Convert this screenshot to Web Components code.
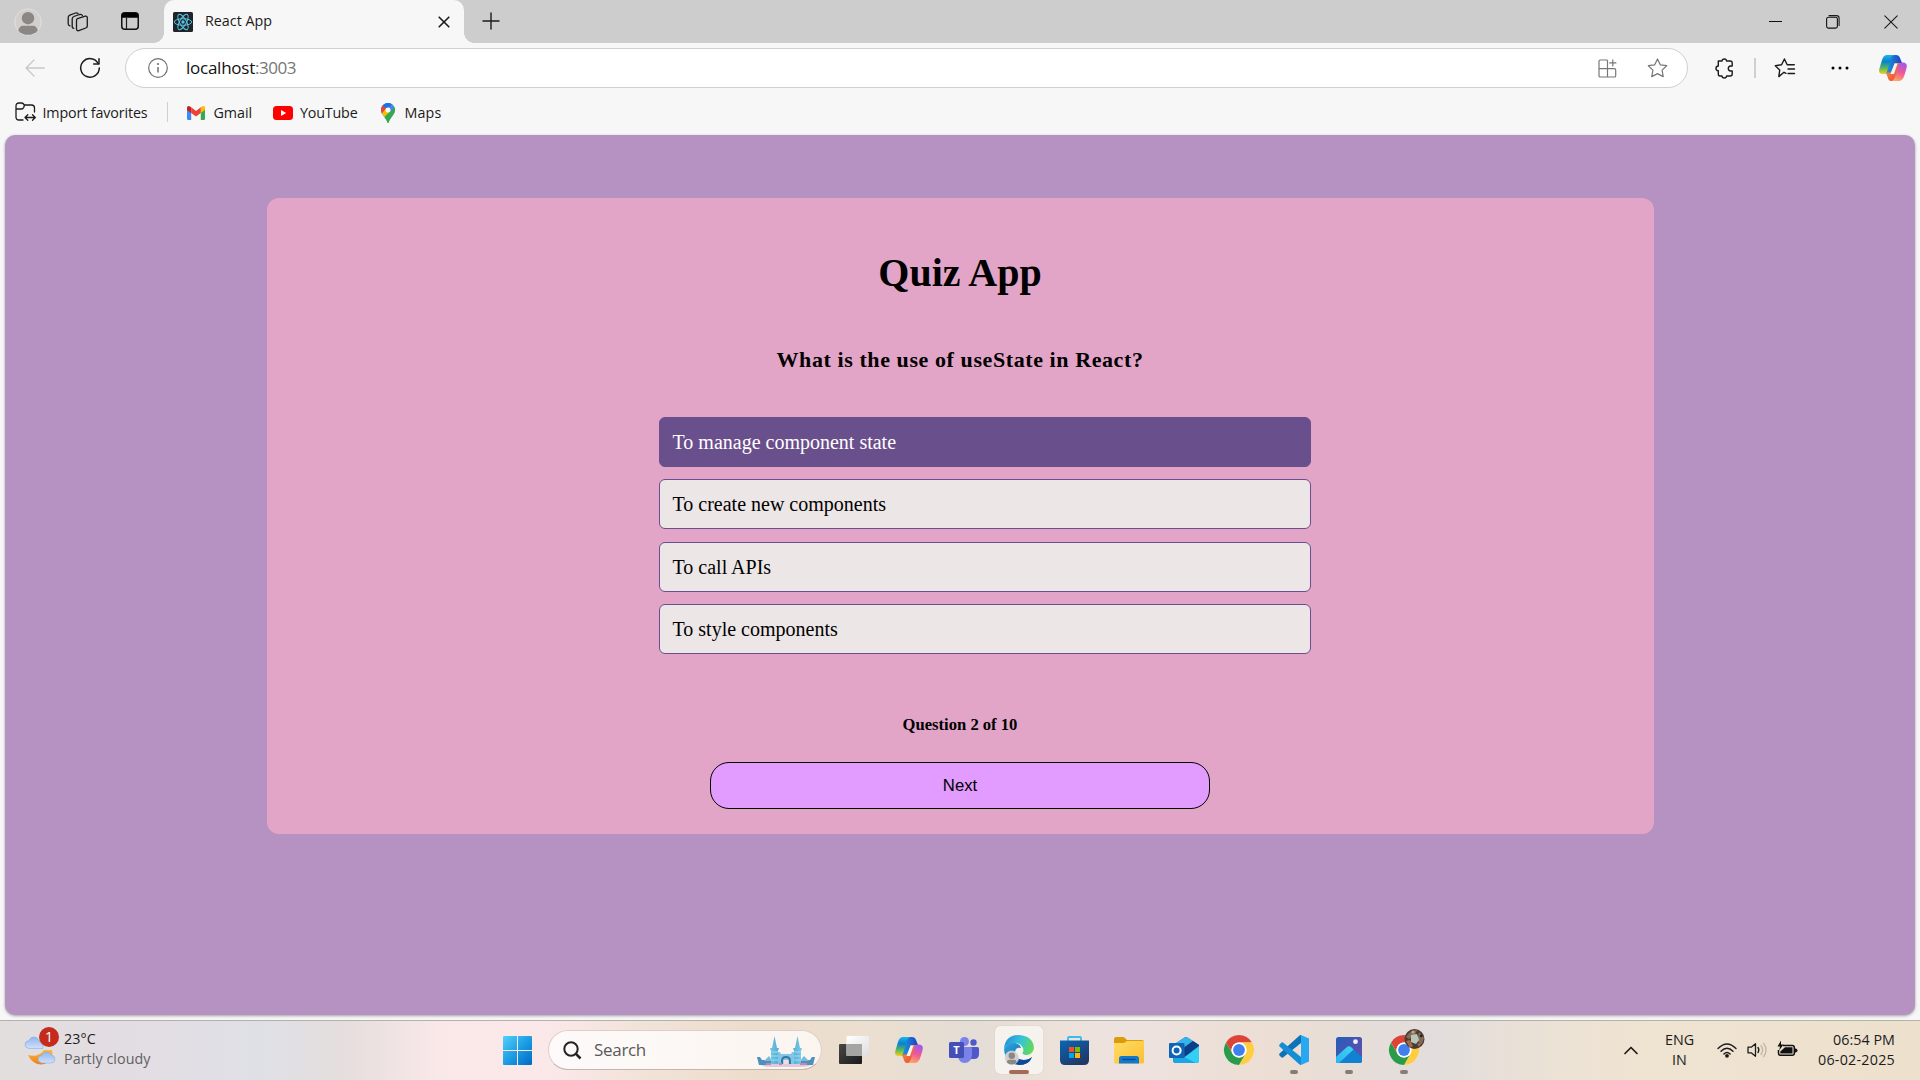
<!DOCTYPE html>
<html lang="en">
<head>
<meta charset="utf-8">
<title>React App</title>
<style>
html,body{margin:0;height:100%;overflow:hidden;background:#f7f7f7}
</style>
</head>
<body>
<desktop-screen></desktop-screen>
<script>
// Icon drawings: [width, height, markup], one unit per pixel.
const copilot = `<defs><linearGradient id="a" x1="0" y1="0" x2="0" y2="1"><stop stop-color="#1db5e8"/><stop offset=".35" stop-color="#0a7fd0"/><stop offset=".65" stop-color="#4cb564"/><stop offset="1" stop-color="#f5cf18"/></linearGradient>
<linearGradient id="b" x1=".6" y1="0" x2=".3" y2="1"><stop stop-color="#a458ee"/><stop offset=".5" stop-color="#ee5a94"/><stop offset="1" stop-color="#ffa763"/></linearGradient>
<linearGradient id="c" x1="0" y1="0" x2="1" y2="0"><stop stop-color="#1a9cdc"/><stop offset="1" stop-color="#1b3fc9"/></linearGradient>
<linearGradient id="d" x1="0" y1="0" x2="1" y2="1"><stop stop-color="#f9a43b"/><stop offset="1" stop-color="#e8403b"/></linearGradient></defs>
<path d="M7 18H12L16 8H23L21 3Q20 0 17 0H11Z" fill="url(#c)"/><path d="M6 18Q8 19 8.600 22Q9.500 26 12 26H17L21 8H16L13 17Z" fill="url(#d)"/>
<path d="M8 0H15Q12.500 1 11.500 4L8.500 15Q7.600 19 5 19H4Q-1 19 .3 14L3 5Q4.500 0 8 0Z" fill="url(#a)"/>
<path d="M20 7.500H23.500Q29 7.500 27.600 13L25.500 20Q23.700 26 19.500 26H12.500Q15 25 16 22L19 11Q20 7.500 23 7.500Z" fill="url(#b)"/><path d="M15.500 8.500H18.500L15 19H11.500Z" fill="#f7f2ee"/>`;
const chrome = `<circle cx="15" cy="15" r="15" fill="#fff"/><path d="M2 7.500A15 15 0 0 1 28 7.500H15A7.500 7.500 0 0 0 8.500 18.750Z" fill="#dd4437"/><path d="M28 7.500A15 15 0 0 1 15 30L21.500 18.750A7.500 7.500 0 0 0 15 7.500Z" fill="#ffcd41"/><path d="M15 30A15 15 0 0 1 2 7.500L8.500 18.750A7.500 7.500 0 0 0 21.500 18.750Z" fill="#2a9b4b"/><circle cx="15" cy="15" r="7.500" fill="#fff"/><circle cx="15" cy="15" r="5.900" fill="#3f80ee"/>`;
const person = (c,bg)=>`<circle cx="14" cy="14" r="13.200" fill="${bg}" stroke="#e2e0de" stroke-width="1"/><circle cx="14" cy="10.200" r="6.200" fill="${c}"/><path d="M4.200 22.400Q5.500 17.700 9 17.700H19Q22.500 17.700 23.800 22.400A13 13 0 0 1 4.200 22.400Z" fill="${c}"/>`;
const s = (d,w=1.5,c='#1b1b1b')=>`<path d="${d}" fill="none" stroke="${c}" stroke-width="${w}" stroke-linecap="round" stroke-linejoin="round"/>`;
const ICONS = {
profile:[28,28,person('#8b8784','#d2d0cd')],
workspaces:[22,20,`${s('M10.500 6.600L18.200 4.200Q20.300 3.700 20.300 6V14Q20.300 15.500 18.800 16L11.800 18.600Q9.700 19.200 9.500 17V8.500Q9.500 7 10.500 6.600Z',1.3)}${s('M6.800 16.300Q5.200 16.300 5.200 14.200V7Q5.200 5.100 6.800 4.500L12.500 2.500Q14.700 1.900 15.400 3.500',1.3)}${s('M3 13.800Q1.200 13.500 1.200 11.700V5.500Q1.200 3.700 2.800 3.100L8.500 1Q10.200.5 11 1.700',1.3)}`],
verttabs:[18,18,`<rect x=".75" y=".75" width="16.500" height="16.500" rx="3" fill="none" stroke="#111" stroke-width="1.500"/><path d="M1 5.700V3Q1 1 3 1H15Q17 1 17 3V5.700Z" fill="#000"/>${s('M5.500 6V17',1.2)}`],
react:[20,20,`<rect width="20" height="20" rx="1.500" fill="#20232a"/><g fill="none" stroke="#58c4e0" stroke-width="1"><ellipse cx="10" cy="10" rx="8.700" ry="3.300"/><ellipse cx="10" cy="10" rx="8.700" ry="3.300" transform="rotate(60 10 10)"/><ellipse cx="10" cy="10" rx="8.700" ry="3.300" transform="rotate(120 10 10)"/></g><circle cx="10" cy="10" r="1.700" fill="#58c4e0"/>`],
x:[12,12,s('M1.200 1.200L10.800 10.800M10.800 1.200L1.200 10.800',1.6)],
plus:[18,18,s('M9 1V17M1 9H17',1.4)],
min:[13,14,`<path d="M0 6.500H13" stroke="#111" stroke-width="1"/>`],
restore:[14,14,`<rect x=".6" y="2.300" width="10.800" height="10.800" rx="1.800" fill="none" stroke="#111" stroke-width="1.100"/>${s('M3 .6H10.500Q13.100.6 13.100 3.200V10.500',1.1)}`],
close:[14,14,s('M.8.8L13.200 13.200M13.200.8L.8 13.200',1.1)],
back:[20,18,s('M19.300 9H1M9 1L1 9L9 17',1.3,'#c9c9c9')],
reload:[22,22,`${s('M19.200 6.500A9.300 9.300 0 1 0 20.300 11',1.5)}${s('M20 1.700V7H14.700',1.5)}`],
info:[20,20,`<circle cx="10" cy="10" r="9.300" fill="none" stroke="#717171" stroke-width="1.200"/><path d="M10 9V14.500" stroke="#717171" stroke-width="1.500"/><circle cx="10" cy="6" r="1.100" fill="#717171"/>`],
apps:[19,19,s('M9.300 1.700Q9.300 1 8.600 1H2.300Q1 1 1 2.300V16.700Q1 18 2.300 18H16.400Q17.700 18 17.700 16.700V11Q17.700 9.700 16.400 9.700H1M9.500 1.500V18M14.800.8V7M11.700 3.900H17.900',1.2,'#777')],
star:[21,20,s('M10.500 1L13.300 6.800L19.700 7.700L15.100 12.100L16.200 18.600L10.500 15.600L4.800 18.600L5.900 12.100L1.300 7.700L7.700 6.800Z',1.2,'#777')],
puzzle:[19,21,s('M3.300 3H7Q7.200 1 9.300 1Q11.400 1 11.600 3H15.200Q17.200 3 17.200 5V8H15.700Q13.300 8.200 13.300 10.500Q13.300 12.800 15.700 13H17.200V16Q17.200 18 15.200 18H11.600Q11.400 20 9.300 20Q7.200 20 7 18H5Q3.300 18 3.300 16V12.700Q1 12.500 1 10.400Q1 8.200 3.300 8Z',1.4)],
favs:[22,20,`${s('M12 15.300L10 14.300L4.800 18.600L5.700 12.100L1.300 7.700L7.600 6.800L10.400 1L13.200 6.800H20.300',1.4)}${s('M14 11H20.500M14 15.500H20.500',1.4)}`],
dots:[18,4,`<circle cx="2" cy="2" r="1.500"/><circle cx="9" cy="2" r="1.500"/><circle cx="16" cy="2" r="1.500"/>`],
copilot:[28,26,copilot],
importf:[21,20,s('M8 18H4Q1 18 1 15V4Q1 1 4 1H6.500Q7.700 1 8.500 2L9.300 3H16.500Q19.500 3 19.500 6V10M1 7H6.500Q8 7 8.700 5.500L9.500 3M10.500 15.500H20M12.800 12.700L10 15.500L12.800 18.300M17.500 12.700L20.300 15.500L17.500 18.300',1.3)],
gmail:[18,14,`<path d="M0 2.500V12.500Q0 14 1.300 14H4.200V6Z" fill="#4285f4"/><path d="M18 2.500V12.500Q18 14 16.700 14H13.800V6Z" fill="#34a853"/><path d="M13.800 1.300V7L18 4V2Q18-.8 15.500.2Z" fill="#fbbc04"/><path d="M4.200 1.300V7L9 10.500L13.800 7V1.300L9 5Z" fill="#ea4335"/><path d="M0 2V4L4.200 7V1.300L2.500.2Q0-.6 0 2Z" fill="#c5221f"/>`],
youtube:[20,14,`<rect width="20" height="14" rx="3.500" fill="#f00"/><path d="M8 4L13.200 7L8 10Z" fill="#fff"/>`],
maps:[14,20,`<clipPath id="m"><path d="M7 0A7 7 0 0 1 14 7Q14 10 11 13.500Q8.200 17 7.700 19.300Q7 20.500 6.300 19.300Q5.800 17 3 13.500Q0 10 0 7A7 7 0 0 1 7 0Z"/></clipPath><g clip-path="url(#m)"><rect width="14" height="20" fill="#34a853"/><path d="M0 13L14-3V-5H0Z" fill="#4285f4"/><path d="M-1 2L2 2.200L5.600 5.200L0 11.500Z" fill="#ea4335"/><path d="M0 11.500L10.300-.5L14 3L2.500 15.500Z" fill="#fbbc04"/><path d="M1.500 2L7-1L12 1L8.500 4.500L5.500 5.500Z" fill="#1a73e8"/><path d="M8 5L11 1.500L15 5L14 6.500L9 9Z" fill="#4285f4"/><path d="M3 14.500L13.600 4L15 12L7 21Z" fill="#34a853"/></g><circle cx="7" cy="7" r="2.500" fill="#fff"/>`],
weather:[36,36,`<defs><linearGradient id="w" x1="0" y1="0" x2="0" y2="1"><stop stop-color="#91b5ef"/><stop offset="1" stop-color="#d0e0fa"/></linearGradient><linearGradient id="k" x1="0" y1="0" x2="0" y2="1"><stop stop-color="#fabb38"/><stop offset="1" stop-color="#ee7e20"/></linearGradient></defs><path d="M4 17.500Q0 17 0 13.500Q0 10 4 9.500Q5 6 9 6Q13 6 14 10Q17 10 18 14V17.500Z" fill="url(#w)" stroke="#85aee8" stroke-width=".6"/><path d="M3 24Q13 27 19 19H27Q29 26 23 31Q16 36 8.500 31Q4.500 28 3 24Z" fill="url(#k)"/><path d="M17 32Q13 31 13 28Q13 24.500 17 24.500Q18 20.500 22 21Q25 21 26 24Q30 24.500 30 28Q30 32 26 32Z" fill="url(#w)" stroke="#85aee8" stroke-width=".6"/>`],
windows:[29,29,`<defs><linearGradient id="a" gradientUnits="userSpaceOnUse" x1="0" y1="0" x2="29" y2="29"><stop stop-color="#53d1fb"/><stop offset=".5" stop-color="#1d9de4"/><stop offset="1" stop-color="#0069c4"/></linearGradient></defs><path d="M1 0H14V14H0V1Q0 0 1 0ZM15 0H28Q29 0 29 1V14H15ZM0 15H14V29H1Q0 29 0 28ZM15 15H29V28Q29 29 28 29H15Z" fill="url(#a)"/>`],
search:[19,19,`<circle cx="8" cy="8" r="6.700" fill="none" stroke="#222" stroke-width="2"/><path d="M12.700 12.700L17.500 17.500" stroke="#222" stroke-width="2.500"/>`],
castle:[58,32,`<defs><linearGradient id="a" x1="0" y1="0" x2="1" y2="0"><stop stop-color="#72c7e5"/><stop offset=".5" stop-color="#4295c9"/><stop offset="1" stop-color="#79cce8"/></linearGradient></defs><path d="M3 28H55Q52 31 45 31H14Q6 31 3 28Z" fill="#e3c9d7"/><path d="M0 21H3L5 24H14V29H2L1 25ZM58 21H55L53 24H44V29H56L57 25Z" fill="#4d8fbd"/><path d="M7 25L12 20L15 25ZM43 25L47 20L52 25Z" fill="#76bbdd"/><path d="M20 16H23L24 18H34L35 16H38V28H20Z" fill="#82c5e7"/><path d="M14 28V15L13 12H15L17.500 0L20 12H22L21 15V28ZM37 28V15L36 12H38L40.500 0L43 12H45L44 15V28Z" fill="url(#a)"/><path d="M14 16H21M14 20H21M14 24H21M37 16H44M37 20H44M37 24H44" stroke="#9cdef1"/><path d="M24 28V25Q24 20 29 20Q34 20 34 25V28H32V25Q32 22 29 22Q26 22 26 25V28Z" fill="#3577a6"/><rect x="26.500" y="24" width="5" height="4" fill="#efdde3"/><path d="M9 28H14M22 28H25M43 28H50" stroke="#bc8bb4" stroke-width="2"/>`],
taskview:[30,28,`<defs><linearGradient id="a" x1="0" y1="0" x2="1" y2="1"><stop stop-color="#474747"/><stop offset="1" stop-color="#1a1a1a"/></linearGradient><linearGradient id="b" x1="0" y1="0" x2="1" y2="1"><stop stop-color="#fff"/><stop offset="1" stop-color="#dedede"/></linearGradient></defs><rect y="8" width="23" height="20" rx="1" fill="url(#a)"/><rect x="7.500" width="22.500" height="20" rx="1" fill="url(#b)"/><rect x="7.500" y="8" width="15.500" height="12" fill="#a5a5a3"/>`],
teams:[30,26,`<circle cx="24.500" cy="5.500" r="3.200" fill="#5059c9"/><path d="M20 10H28.500Q30 10 30 11.500V17Q30 22 25 22H20Z" fill="#5059c9"/><circle cx="15.500" cy="4.500" r="4.500" fill="#7b83eb"/><path d="M9 10H21.500Q23 10 23 11.500V18Q22 26 15.500 26Q10 25.500 9 20Z" fill="#7b83eb"/><rect y="5" width="15" height="16" rx="1.500" fill="#454fb8"/><text x="7.500" y="17" font-family="Open Sans, sans-serif" font-weight="700" font-size="11" text-anchor="middle" fill="#fff">T</text>`],
edge:[30,30,`<defs><linearGradient id="a" x1="0" y1=".3" x2="1" y2=".6"><stop stop-color="#2490d7"/><stop offset=".5" stop-color="#34c3dc"/><stop offset="1" stop-color="#65dc50"/></linearGradient><linearGradient id="b" x1="0" y1="0" x2="1" y2="1"><stop stop-color="#2daae2"/><stop offset="1" stop-color="#0b4c9b"/></linearGradient></defs><path d="M0 14Q1 0 15 0Q29 1 30 13Q29 19 23 20Q19 20 18.500 18Q20 16 19 13Q15 6 7 9Q2 10 0 14Z" fill="url(#a)"/><path d="M0 14Q4 7 11 8Q16 9 17 13Q11 12 11 18Q12 25 20 25Q25 25 28 22Q25 30 15 30Q1 29 0 14Z" fill="url(#b)"/><path d="M11 18Q12 25 20 25Q25 25 28 22Q25 30 15 30Q9 28 9 23Z" fill="#0c4a99"/><g transform="translate(0.500 15.500) scale(.52)">${person('#8b8784','#d2d0cd')}</g>`],
store:[29,29,`<defs><linearGradient id="a" x1="0" y1="0" x2=".6" y2="1"><stop stop-color="#0a66b6"/><stop offset="1" stop-color="#213867"/></linearGradient></defs><path d="M8 6V2Q8 1 9 1H20Q21 1 21 2V6" fill="none" stroke="#35bdec" stroke-width="1.800"/><path d="M0 4.500H29V24Q29 29 24 29H5Q0 29 0 24Z" fill="url(#a)"/><path d="M9 11h5v5H9z" fill="#f25022"/><path d="M15 11h5v5h-5z" fill="#7fba00"/><path d="M9 17h5v5H9z" fill="#00a4ef"/><path d="M15 17h5v5h-5z" fill="#ffb900"/>`],
folder:[30,27,`<defs><linearGradient id="a" x1="0" y1="0" x2="1" y2="1"><stop stop-color="#ffdc65"/><stop offset="1" stop-color="#fdbf30"/></linearGradient></defs><path d="M0 10V2Q0 0 2 0H9Q10 0 11 1L13 3H28Q30 3 30 5V10Z" fill="#dc9b0b"/><path d="M0 6H10L13 4H29Q30 4 30 5V25Q30 26.500 28.500 26.500H1.500Q0 26.500 0 25Z" fill="url(#a)"/><path d="M5 26.500V21.500Q5 19 7.500 19H22.500Q25 19 25 21.500V26.500Z" fill="#1579cb"/><path d="M8.500 22.500H21.500" stroke="#0b4a91" stroke-width="1.300"/>`],
outlook:[30,26,`<path d="M4 8L15.500.6Q17 0 18.500.6L30 8V23Q30 26 27 26H7Q4 26 4 23Z" fill="#155fb5"/><path d="M4 8L15.500.6Q17 0 18.500.6L24 4L8 15H4Z" fill="#37b5eb"/><path d="M24 4L30 8V10L17 19L10 15Z" fill="#0c3e86"/><path d="M30 9V23Q30 26 27 26H8Z" fill="#34cff5"/><path d="M5 17Q5 15 9 17L27 26H7Q4 26 4 23Z" fill="#1ca6e4"/><rect y="6" width="15.500" height="15" rx="1" fill="#0f64b8"/><circle cx="7.600" cy="13.500" r="4" fill="none" stroke="#fff" stroke-width="2"/>`],
chrome:[30,30,chrome],
chrome2:[36,36,`<g transform="translate(3 3)">${chrome}</g><clipPath id="p"><circle cx="28.500" cy="7" r="10"/></clipPath><g clip-path="url(#p)"><rect x="18" y="-4" width="21" height="22" fill="#4b3b33"/><path d="M20 5Q24-2 31-2L29 3L23 7ZM33 0L38 6L36 12L31 9Z" fill="#836a58"/><path d="M25 3L31 2L33 8L30 12L25 10Z" fill="#b7c6ba"/><path d="M20 9L24 8L27 14L24 16ZM31 12L36 10L33 15Z" fill="#a06a4f"/><circle cx="27" cy="0" r="1.500" fill="#c8a68c"/><circle cx="35" cy="4" r="1.300" fill="#24201e"/></g>`],
vscode:[30,30,`<path d="M22 0L30 3.500V26.500L22 30Z" fill="#29a8f2"/><path d="M22 0V8L4 22.500Q3 23 2 22L.5 20.500Q-.3 19.500.5 18.500L20 1Q21 0 22 0Z" fill="#0b73b7"/><path d="M22 30V22L4 7.500Q3 7 2 8L.5 9.500Q-.3 10.500.5 11.500L20 29Q21 30 22 30Z" fill="#168ed5"/>`],
photos:[26,26,`<defs><linearGradient id="a" x1="0" y1="0" x2="1" y2="1"><stop stop-color="#235eb8"/><stop offset="1" stop-color="#6d4bad"/></linearGradient><linearGradient id="b" x1="0" y1="1" x2="1" y2="0"><stop stop-color="#29b8ef"/><stop offset="1" stop-color="#45d0f4"/></linearGradient></defs><rect width="26" height="26" rx="2.500" fill="url(#a)"/><path d="M0 20L11 10Q13 8.500 15 10L26 20V23.500Q26 26 23.500 26H2.500Q0 26 0 23.500Z" fill="#1181d2"/><path d="M0 20L11 10Q13 8.500 15 10L17.500 12.500L3 26H2.500Q0 26 0 23.500Z" fill="url(#b)"/><circle cx="19.500" cy="4.700" r="2.400" fill="#f3eefb"/>`],
chev:[14,9,s('M1 7.500L7 1.500L13 7.500',1.7)],
wifi:[20,15,`${s('M1 5.500Q10-3.500 19 5.500M4 8.200Q10 2.200 16 8.200M6.900 10.900Q10 7.900 13.100 10.900',1.4)}<circle cx="10" cy="12.800" r="1.900" fill="#1b1b1b"/>`],
sound:[20,16,`${s('M1 5.200H4.200L8.500 1.700V14.300L4.200 10.800H1Z',1.3)}${s('M11 5.500Q12.800 8 11 10.500',1.3)}${s('M14 3.500Q17.300 8 14 12.500M16.600 1.300Q21.500 8 16.600 14.700',1.3,'#bfb5a7')}`],
battery:[21,17,`<path d="M6 5.600H15.300Q17.300 5.600 17.300 7.600V13.300Q17.300 15.300 15.300 15.300H3.500Q1.500 15.300 1.500 13.300V10" fill="none" stroke="#111" stroke-width="1.500"/><path d="M8 7.300H15.500V13.600H3.300V11.500Z" fill="#111"/><path d="M18 8.500H19Q20.500 9.300 20.500 10.500Q20.500 11.700 19 12.500H18Z" fill="#111"/><path d="M4 .5L.5 6.500H3L2.200 10.500L6.500 4.500H4Z" fill="#111"/>`]
};

class UiIcon extends HTMLElement{
  constructor(){super();this.attachShadow({mode:'open'})}
  connectedCallback(){
    const [w,h,m]=ICONS[this.getAttribute('name')];
    this.shadowRoot.innerHTML=`<style>:host{display:block;flex:none;width:${w}px;height:${h}px}svg{display:block;overflow:visible}</style><svg width="${w}" height="${h}" viewBox="0 0 ${w} ${h}">${m}</svg>`;
  }
}
customElements.define('ui-icon',UiIcon);

// A one-line label whose tracking is adjusted so that it fills the given width.
class UiText extends HTMLElement{
  constructor(){super();this.attachShadow({mode:'open'}).innerHTML=`<style>:host{display:block;flex:none;white-space:nowrap}span{display:inline-block}</style><span><slot></slot></span>`}
  connectedCallback(){
    const w=+this.getAttribute('w'),sp=this.shadowRoot.querySelector('span');
    this.style.width=w+'px';
    const n=this.textContent.length;
    sp.style.letterSpacing=((w-sp.getBoundingClientRect().width)/n).toFixed(3)+'px';
  }
}

const define=(name,html)=>{
  const t=document.createElement('template');t.innerHTML=html;
  customElements.define(name,class extends HTMLElement{
    constructor(){super();this.attachShadow({mode:'open'}).append(t.content.cloneNode(true))}
  });
};

define('tab-strip',`<style>
:host{display:flex;align-items:center;height:43px;background:#cdcdcd;padding-left:14px;padding-right:22px;box-sizing:border-box;font:14.3px/20px "Open Sans",sans-serif;color:#1b1b1b}
.tab{display:flex;align-items:center;align-self:stretch;width:300px;box-sizing:border-box;margin-left:25px;padding-left:9px;background:#f7f7f7;border-radius:10px 10px 0 0;position:relative}
.tab::before,.tab::after{content:"";position:absolute;bottom:0;width:10px;height:10px}
.tab::before{left:-10px;background:radial-gradient(circle at 0 0,transparent 9.5px,#f7f7f7 10px)}
.tab::after{right:-10px;background:radial-gradient(circle at 100% 0,transparent 9.5px,#f7f7f7 10px)}
</style>
<ui-icon name="profile"></ui-icon><ui-icon name="workspaces" style="margin-left:25px"></ui-icon><ui-icon name="verttabs" style="margin-left:32px;margin-top:-1px"></ui-icon>
<div class="tab"><ui-icon name="react"></ui-icon><ui-text w="67" style="margin-left:12px;margin-top:-2px">React App</ui-text><ui-icon name="x" style="margin-left:166px"></ui-icon></div>
<ui-icon name="plus" style="margin-left:18px;margin-top:-1px"></ui-icon>
<ui-icon name="min" style="margin-left:auto"></ui-icon><ui-icon name="restore" style="margin-left:44px"></ui-icon><ui-icon name="close" style="margin-left:44px"></ui-icon>`);

define('address-bar',`<style>
:host{display:flex;align-items:center;height:50px;padding:0 13px 0 25px;box-sizing:border-box;font:17px/24px "Open Sans",sans-serif;color:#111}
.box{display:flex;align-items:center;box-sizing:border-box;width:1563px;height:40px;margin-left:24px;padding:0 19px 0 22px;background:#fff;border:1px solid #d0d0d0;border-radius:20px}
.port{color:#767676}.sep{width:2px;height:20px;background:#d0d0d0;margin:0 19px 0 20px}
</style>
<ui-icon name="back"></ui-icon><ui-icon name="reload" style="margin-left:34px"></ui-icon>
<div class="box"><ui-icon name="info"></ui-icon><ui-text w="69" style="margin-left:18px;margin-top:-1px">localhost</ui-text><ui-text class="port" w="41" style="margin-top:-1px">:3003</ui-text>
<ui-icon name="apps" style="margin-left:auto"></ui-icon><ui-icon name="star" style="margin-left:30px"></ui-icon></div>
<ui-icon name="puzzle" style="margin-left:27px"></ui-icon><div class="sep"></div><ui-icon name="favs" style="margin-left:-1px"></ui-icon><ui-icon name="dots" style="margin-left:35px"></ui-icon><ui-icon name="copilot" style="margin-left:auto"></ui-icon>`);

define('bookmarks-bar',`<style>
:host{display:flex;align-items:center;height:38px;padding-left:15px;font:14.3px/20px "Open Sans",sans-serif;color:#1b1b1b}
.sep{width:1px;height:20px;background:#cfcfcf;margin:0 19px 0 19px}
ui-text{margin-top:1px}
</style>
<ui-icon name="importf"></ui-icon><ui-text w="105" style="margin-left:6.5px">Import favorites</ui-text><div class="sep"></div>
<ui-icon name="gmail" style="margin-top:1px"></ui-icon><ui-text w="38.500" style="margin-left:9px">Gmail</ui-text>
<ui-icon name="youtube" style="margin-left:21px;margin-top:1px"></ui-icon><ui-text w="57.500" style="margin-left:7px">YouTube</ui-text>
<ui-icon name="maps" style="margin-left:23px;margin-top:1px"></ui-icon><ui-text w="37" style="margin-left:10px">Maps</ui-text>`);

define('quiz-option',`<style>
:host{display:block;box-sizing:border-box;height:50px;padding:0 12.5px;border:1px solid #6a4f8d;border-radius:6px;background:#ece6e6;font-size:20px;line-height:48px;color:#000}
:host([selected]){background:#6a4f8d;color:#fff}
</style><slot></slot>`);

define('quiz-card',`<style>
:host{display:flex;flex-direction:column;align-items:center;box-sizing:border-box;width:1387px;height:636px;background:#e3a5c7;border-radius:12px;font-family:"Liberation Serif","Times New Roman",serif;color:#000}
h1{font-size:40px;line-height:46px;margin:52px 0 0}
h3{font-size:22px;line-height:26px;margin:51px 0 0}
.opts{display:flex;flex-direction:column;gap:12.4px;width:652px;margin:44px 0 0 50px}
.count{font-weight:700;font-size:16.6px;line-height:18px;margin-top:62px}
button{box-sizing:border-box;flex:none;width:500px;height:47px;margin:28px 0 0;padding:0;border:1px solid #000;border-radius:19px;background:#e29bff;font:16.7px "Liberation Sans",Arial,sans-serif;color:#000}
</style>
<h1>Quiz App</h1><h3><ui-text w="367">What is the use of useState in React?</ui-text></h3>
<div class="opts"><quiz-option selected>To manage component state</quiz-option><quiz-option>To create new components</quiz-option><quiz-option>To call APIs</quiz-option><quiz-option>To style components</quiz-option></div>
<div class="count">Question 2 of 10</div><button>Next</button>`);

define('page-view',`<style>
:host{display:flex;justify-content:center;align-items:flex-start;box-sizing:border-box;height:880px;margin:4px 5px 0;padding-top:63px;background:#b592c2;border-radius:10px;box-shadow:0 1px 3px rgba(0,0,0,.35)}
</style><quiz-card></quiz-card>`);

define('task-app',`<style>
:host{display:flex;align-items:center;justify-content:center;flex:none;width:55px;height:48px;position:relative}
:host([active])::before{content:"";position:absolute;inset:0 3.5px;border-radius:5px;background:#f6f2ee;box-shadow:0 0 1px #b9aea5}
:host([active])::after,:host([running])::after{content:"";position:absolute;bottom:0;left:50%;width:8px;height:4px;margin-left:-4px;border-radius:2px;background:#857d78}
:host([active])::after{width:20px;margin-left:-10px;background:#a56a5a}
::slotted(*){position:relative}
</style><slot></slot>`);

define('task-bar',`<style>
:host{display:flex;align-items:center;height:60px;box-sizing:border-box;border-top:1px solid #b4b0ad;padding-right:25px;
background:linear-gradient(90deg,#e2dedd 0,#e3dde3 110px,#dfe0e6 260px,#e5dedd 345px,#fae8e9 440px,#fbe9ea 540px,#f2e3d9 640px,#ecdccb 760px,#ecdfd0 860px,#e4ddd5 970px,#ece2da 1060px,#eee2df 1140px,#ecded3 1270px,#e2dddc 1430px,#ece2d5 1560px,#efe3d1 1650px,#ede1ce 1920px);
font:14.3px/20px "Open Sans",sans-serif;color:#1c1c1c}
.weather{display:flex;align-items:center;width:503px;margin-top:-3px;padding-left:25px;box-sizing:border-box;position:relative}
.badge{position:absolute;left:39px;top:-2px;width:20px;height:20px;border-radius:50%;background:#c42b1c;color:#fff;text-align:center;font-size:14px;line-height:20px}
.muted{color:#5f5f60}
.search{display:flex;align-items:center;box-sizing:border-box;width:274px;height:40px;margin-left:16px;margin-top:-1px;padding:0 6px 0 14px;border-radius:20px;background:linear-gradient(90deg,#fefafa,#faf5ef);border:1px solid #decfca;border-bottom-color:#c3b6b0;font-size:17px;line-height:24px;color:#5b5958}
.apps{display:flex;margin-left:4.5px;margin-top:-1px}
.tray{display:flex;align-items:center;margin-left:auto;margin-top:-1px}
.stack{display:flex;flex-direction:column;align-items:center}.end{align-items:flex-end;margin-top:-1px}
</style>
<div class="weather"><ui-icon name="weather"></ui-icon><div class="badge">1</div><div style="margin-left:3px"><ui-text w="32">23°C</ui-text><ui-text class="muted" w="86.500">Partly cloudy</ui-text></div></div>
<ui-icon name="windows"></ui-icon>
<div class="search"><ui-icon name="search"></ui-icon><ui-text w="52" style="margin-left:12px">Search</ui-text><ui-icon name="castle" style="margin-left:auto;margin-top:3px"></ui-icon></div>
<div class="apps"><task-app><ui-icon name="taskview"></ui-icon></task-app><task-app><ui-icon name="copilot"></ui-icon></task-app><task-app><ui-icon name="teams"></ui-icon></task-app><task-app active><ui-icon name="edge"></ui-icon></task-app><task-app><ui-icon name="store"></ui-icon></task-app><task-app><ui-icon name="folder"></ui-icon></task-app><task-app><ui-icon name="outlook"></ui-icon></task-app><task-app><ui-icon name="chrome"></ui-icon></task-app><task-app running><ui-icon name="vscode"></ui-icon></task-app><task-app running><ui-icon name="photos"></ui-icon></task-app><task-app running><ui-icon name="chrome2"></ui-icon></task-app></div>
<div class="tray"><ui-icon name="chev"></ui-icon>
<div class="stack" style="margin-left:27px"><ui-text w="29">ENG</ui-text><ui-text w="15">IN</ui-text></div>
<ui-icon name="wifi" style="margin-left:23px"></ui-icon><ui-icon name="sound" style="margin-left:10px"></ui-icon><ui-icon name="battery" style="margin-left:10px;margin-top:-4px"></ui-icon>
<div class="stack end" style="margin-left:20px"><ui-text w="62">06:54 PM</ui-text><ui-text w="77">06-02-2025</ui-text></div></div>`);

define('desktop-screen',`<style>
:host{display:flex;flex-direction:column;width:1920px;height:1080px;overflow:hidden;background:#f7f7f7}
task-bar{margin-top:auto}
</style><tab-strip></tab-strip><address-bar></address-bar><bookmarks-bar></bookmarks-bar><page-view></page-view><task-bar></task-bar>`);
customElements.define('ui-text',UiText);
</script>
</body>
</html>
